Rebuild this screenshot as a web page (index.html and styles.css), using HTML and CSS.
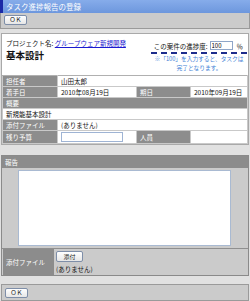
FILE: index.html
```html
<!DOCTYPE html>
<html>
<head>
  <title>タスク進捗報告の登録</title>
  <link rel="stylesheet" href="styles.css">
</head>
<body>
  <div class="title">タスク進捗報告の登録</div>
  <div class="toolbar">
    <button class="btn">ＯＫ</button>
  </div>

  <div class="panel info">
    <div class="info-head">
      <div class="project">
        <div class="project-name">プロジェクト名: <a href="#">グループウェア新規開発</a></div>
        <div class="task-name">基本設計</div>
      </div>
      <div class="progress">
        <div class="progress-row">
          この案件の進捗度:
          <input type="text" class="progress-input" value="100">
          <span class="pct">％</span>
        </div>
        <div class="progress-note">※「100」を入力すると、タスクは<br>完了となります。</div>
      </div>
    </div>

    <table class="detail">
      <colgroup>
        <col class="c-label">
        <col class="c-val">
        <col class="c-label2">
        <col>
      </colgroup>
      <tr>
        <td class="label">担任者</td>
        <td colspan="3">山田太郎</td>
      </tr>
      <tr>
        <td class="label">着手日</td>
        <td>2010年08月19日</td>
        <td class="label">期日</td>
        <td>2010年09月19日</td>
      </tr>
      <tr>
        <td class="label" colspan="4">概要</td>
      </tr>
      <tr>
        <td colspan="4">新規能基本設計</td>
      </tr>
      <tr>
        <td class="label">添付ファイル</td>
        <td colspan="3">(ありません)</td>
      </tr>
      <tr class="tall">
        <td class="label">残り予算</td>
        <td><input type="text" class="budget-input"></td>
        <td class="label">人員</td>
        <td></td>
      </tr>
    </table>
  </div>

  <div class="panel report">
    <div class="report-head">報告</div>
    <div class="report-body">
      <textarea class="report-text"></textarea>
    </div>
    <div class="attach">
      <div class="attach-label">添付ファイル</div>
      <div class="attach-field">
        <button class="btn btn-attach">添付</button>
        <div>(ありません)</div>
      </div>
    </div>
  </div>

  <div class="toolbar bottom">
    <button class="btn">ＯＫ</button>
  </div>
</body>
</html>
```

FILE: styles.css
```css
body {
  margin: 0;
  background: #e1e1e1;
  font-family: "Noto Sans CJK JP", "DejaVu Sans", sans-serif;
  font-size: 6.5px;
  color: #111;
  width: 250px;
}

.title {
  height: 13px;
  line-height: 13px;
  padding-left: 3px;
  border-left: 3px solid #1c2aa6;
  background: linear-gradient(#86acea, #6d97dd);
  color: #fff;
  font-size: 7.5px;
}

.toolbar {
  height: 13px;
  padding-top: 2px;
  padding-left: 3px;
  background: #cbcbcb;
  border: 1px solid #9a9a9a;
  border-top: 0;
  margin-bottom: 4px;
}

.toolbar.bottom {
  margin: 8px 1px 0 1px;
  border-top: 1px solid #9a9a9a;
  height: 12px;
  padding-top: 3px;
}

.btn {
  display: block;
  width: 23px;
  height: 10px;
  padding: 0;
  font-family: inherit;
  font-size: 6px;
  line-height: 8px;
  color: #222;
  background: linear-gradient(#ffffff, #e6e6e6);
  border: 1px solid #7e8ea8;
  border-radius: 2px;
}

.panel {
  margin: 0 1px;
  border: 1px solid #a9a9a9;
}

.info {
  background: #fff;
}

.info-head {
  display: flex;
  justify-content: space-between;
  height: 41px;
}

.project {
  padding: 4px 0 0 4px;
}

.project-name {
  line-height: 10px;
}

.project-name a {
  color: #1a1ad0;
}

.task-name {
  font-size: 9.5px;
  font-weight: bold;
  line-height: 14px;
}

.progress {
  width: 96px;
  padding: 6px 1px 0 0;
}

.progress-row {
  display: flex;
  align-items: center;
  justify-content: flex-end;
  gap: 2px;
  height: 11px;
  padding-bottom: 1px;
  border-bottom: 2px dashed #1d2c8c;
  white-space: nowrap;
}

.progress-input {
  width: 19px;
  height: 7px;
  padding: 0 1px;
  font-family: inherit;
  font-size: 6px;
  border: 1px solid #8fa6c8;
}

.pct {
  padding: 0 4px 0 2px;
}

.progress-note {
  padding-top: 1px;
  text-align: center;
  color: #3f7fd6;
  font-size: 5.8px;
  line-height: 8.5px;
  white-space: nowrap;
  letter-spacing: -0.1px;
}

.detail {
  width: 100%;
  border-collapse: collapse;
  table-layout: fixed;
}

.c-label {
  width: 55px;
}

.c-val {
  width: 79px;
}

.c-label2 {
  width: 54px;
}

.detail td {
  height: 10px;
  padding: 0 3px;
  border: 1px solid #c9c9c9;
  line-height: 10px;
  white-space: nowrap;
  overflow: hidden;
}

.detail tr:first-child td {
  border-top: 1px solid #b0b0b0;
}

.detail .label {
  background: #8d8d8d;
  color: #fff;
}

.detail .tall td {
  height: 12px;
}

.budget-input {
  display: block;
  width: 60px;
  height: 8px;
  padding: 0;
  border: 1px solid #9fb4d4;
}

.report {
  margin-top: 10px;
  background: #cbcbcb;
  border-color: #8a8a8a;
}

.report-head {
  height: 12px;
  line-height: 12px;
  padding-left: 3px;
  background: #8c8c8c;
  color: #fff;
}

.report-body {
  padding: 2px 18px 2px 16px;
}

.report-text {
  display: block;
  width: 211px;
  height: 74px;
  margin: 0;
  padding: 0;
  resize: none;
  overflow-y: scroll;
  background: #fff;
  border: 1px solid #a9bad2;
}

.report-text::-webkit-scrollbar {
  width: 9px;
  background: #fff;
}

.report-text::-webkit-scrollbar-button:single-button {
  display: block;
  height: 8px;
  background: #eeede6;
}

.report-text::-webkit-scrollbar-button:vertical:increment:start,
.report-text::-webkit-scrollbar-button:vertical:decrement:end {
  display: none;
}

.attach {
  display: flex;
  border-top: 1px solid #8f8f8f;
  height: 26px;
}

.attach-label {
  width: 48px;
  margin-left: 1px;
  padding-left: 3px;
  background: #8c8c8c;
  color: #fff;
  line-height: 26px;
}

.attach-field {
  padding: 2px 0 0 2px;
  line-height: 9px;
}

.btn-attach {
  width: 27px;
  height: 11px;
  margin-bottom: 3px;
}
```
